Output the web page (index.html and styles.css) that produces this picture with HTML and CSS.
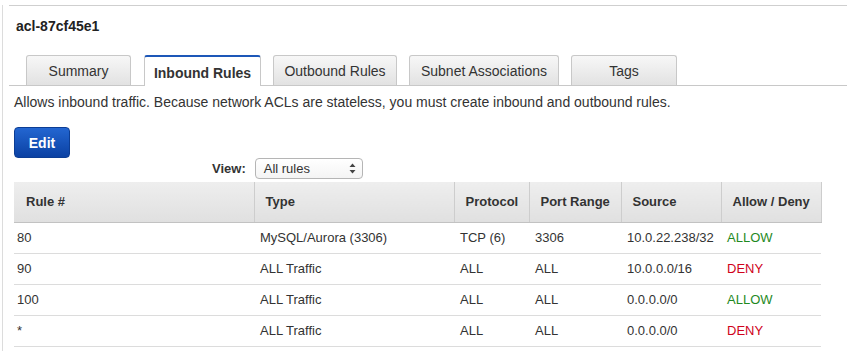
FILE: index.html
```html
<!DOCTYPE html>
<html lang="en">
<head>
    <meta charset="UTF-8">
    <title>Network ACL - Inbound Rules</title>
    <link rel="stylesheet" href="styles.css">
</head>
<body>

<div class="panel">
    <div class="divider"></div>

    <h2 class="acl-title">acl-87cf45e1</h2>

    <!-- tab bar -->
    <div class="tabs">
        <div class="tab tab-summary">Summary</div>
        <div class="tab tab-inbound active">Inbound Rules</div>
        <div class="tab tab-outbound">Outbound Rules</div>
        <div class="tab tab-subnet">Subnet Associations</div>
        <div class="tab tab-tags">Tags</div>
    </div>

    <div class="content">
        <p class="desc">Allows inbound traffic. Because network ACLs are stateless, you must create inbound and outbound rules.</p>

        <button class="btn-edit">Edit</button>

        <div class="view-row">
            <label class="view-label">View:</label>
            <div class="select">
                <span>All rules</span>
                <svg width="7" height="11" viewBox="0 0 7 11">
                    <path d="M3.5 0.5 L6.5 4 L0.5 4 Z" fill="#444"/>
                    <path d="M3.5 10.5 L6.5 7 L0.5 7 Z" fill="#444"/>
                </svg>
            </div>
        </div>

        <table class="rules">
            <thead>
                <tr>
                    <th class="col-rule">Rule #</th>
                    <th class="col-type">Type</th>
                    <th class="col-proto">Protocol</th>
                    <th class="col-port">Port Range</th>
                    <th class="col-src">Source</th>
                    <th class="col-action">Allow / Deny</th>
                </tr>
            </thead>
            <tbody>
                <tr>
                    <td>80</td>
                    <td>MySQL/Aurora (3306)</td>
                    <td>TCP (6)</td>
                    <td>3306</td>
                    <td>10.0.22.238/32</td>
                    <td class="allow">ALLOW</td>
                </tr>
                <tr>
                    <td>90</td>
                    <td>ALL Traffic</td>
                    <td>ALL</td>
                    <td>ALL</td>
                    <td>10.0.0.0/16</td>
                    <td class="deny">DENY</td>
                </tr>
                <tr>
                    <td>100</td>
                    <td>ALL Traffic</td>
                    <td>ALL</td>
                    <td>ALL</td>
                    <td>0.0.0.0/0</td>
                    <td class="allow">ALLOW</td>
                </tr>
                <tr>
                    <td>*</td>
                    <td>ALL Traffic</td>
                    <td>ALL</td>
                    <td>ALL</td>
                    <td>0.0.0.0/0</td>
                    <td class="deny">DENY</td>
                </tr>
            </tbody>
        </table>
    </div>
</div>

</body>
</html>
```

FILE: styles.css
```css
/* base */
body {
    margin: 0;
    font-family: "Liberation Sans", Arial, sans-serif;
    font-size: 13px;
    color: #333;
    background: #fff;
}

.panel {
    margin-left: 2px;
    border-left: 1px solid #dcdcdc;
    min-height: 100vh;
    box-sizing: border-box;
}

.divider {
    margin: 5px 0 0 6px;
    border-top: 1px solid #cfcfcf;
}

.acl-title {
    margin: 12px 0 0 13px;
    font-size: 14px;
    line-height: 16px;
    font-weight: bold;
    color: #222;
}

/* tabs */
.tabs {
    display: flex;
    gap: 12px;
    margin: 21px 0 0 6px;
    padding-left: 17px;
    border-bottom: 1px solid #c8c8c8;
    height: 30px;
}

.tab {
    box-sizing: border-box;
    height: 30px;
    border: 1px solid #c8c8c8;
    border-bottom: none;
    border-radius: 3px 3px 0 0;
    background: linear-gradient(#f7f7f7, #e2e2e2);
    font-size: 14px;
    color: #333;
    display: flex;
    align-items: center;
    justify-content: center;
}

.tab.active {
    height: 31px;
    background: #fff;
    border-top: 2px solid #1d57b8;
    font-weight: bold;
    padding-top: 3px;
}

.tab-summary { width: 105px; }
.tab-inbound { width: 117px; margin-left: 1px; }
.tab-outbound { width: 124px; }
.tab-subnet { width: 150px; }
.tab-tags { width: 106px; }

/* content */
.content {
    padding-left: 11px;
}

.desc {
    margin: 8px 0 0;
    font-size: 14px;
    line-height: 16px;
}

.btn-edit {
    margin-top: 17px;
    width: 56px;
    height: 31px;
    border: 1px solid #0c3d94;
    border-radius: 4px;
    background: linear-gradient(#2366d1, #0b41a3);
    color: #fff;
    font-family: inherit;
    font-size: 14px;
    font-weight: bold;
    padding: 0;
    display: block;
}

.view-row {
    display: flex;
    align-items: center;
    gap: 9px;
    margin-left: 198px;
    height: 21px;
}

.view-label {
    font-weight: bold;
    color: #333;
}

.select {
    box-sizing: border-box;
    width: 108px;
    height: 21px;
    border: 1px solid #b5b5b5;
    border-radius: 4px;
    background: linear-gradient(#fff, #f4f4f4);
    display: flex;
    align-items: center;
    justify-content: space-between;
    padding: 0 6px 0 8px;
}

/* rules table */
.rules {
    margin-top: 3px;
    width: 807px;
    border-collapse: collapse;
    table-layout: fixed;
}

.rules th,
.rules td {
    box-sizing: border-box;
}

.rules th {
    height: 40px;
    padding: 0 0 0 11px;
    text-align: left;
    font-weight: bold;
    color: #333;
    background: linear-gradient(#eeeeee, #e0e0e0);
    border-left: 1px solid #cdcdcd;
    border-bottom: 1px solid #c2c2c2;
}

.rules th:first-child {
    border-left: none;
    padding-left: 12px;
}

.rules th:last-child {
    border-right: 1px solid #cdcdcd;
}

.rules td {
    height: 31px;
    padding: 0 0 0 6px;
    border-bottom: 1px solid #dcdcdc;
}

.rules td:first-child {
    padding-left: 3px;
}

.col-rule { width: 240px; }
.col-type { width: 200px; }
.col-proto { width: 75px; }
.col-port { width: 92px; }
.col-src { width: 100px; }
.col-action { width: 100px; }

.allow {
    color: #1f8a1f;
}

.deny {
    color: #d0021b;
}
```
